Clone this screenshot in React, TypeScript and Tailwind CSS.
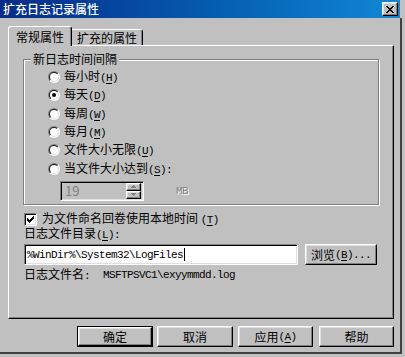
import React from "react";

const raised =
  "bg-[#c0c0c0] border border-t-white border-l-white border-r-black border-b-black shadow-[inset_-1px_-1px_0_#808080,inset_1px_1px_0_#dfdfdf]";
const sunken =
  "border border-t-[#808080] border-l-[#808080] border-r-white border-b-white shadow-[inset_1px_1px_0_#000,inset_-1px_-1px_0_#dfdfdf]";
const mono = "font-['Liberation_Mono',monospace] text-[11px] tracking-[-0.6px]";

function Ak({ k, suffix = "" }: { k: string; suffix?: string }) {
  return (
    <span className={mono}>
      (<span className="underline underline-offset-[2px]">{k}</span>){suffix}
    </span>
  );
}

function Radio({ checked }: { checked?: boolean }) {
  return (
    <svg width="12" height="12" viewBox="0 0 12 12" className="shrink-0">
      <defs>
        <linearGradient id="rgo" x1="0" y1="0" x2="1" y2="1">
          <stop offset="0.5" stopColor="#808080" />
          <stop offset="0.5" stopColor="#ffffff" />
        </linearGradient>
        <linearGradient id="rgi" x1="0" y1="0" x2="1" y2="1">
          <stop offset="0.5" stopColor="#202020" />
          <stop offset="0.5" stopColor="#dfdfdf" />
        </linearGradient>
      </defs>
      <circle cx="6" cy="6" r="6" fill="url(#rgo)" />
      <circle cx="6" cy="6" r="5" fill="url(#rgi)" />
      <circle cx="6" cy="6" r="4" fill="#ffffff" />
      {checked && <circle cx="6" cy="6" r="2" fill="#000" />}
    </svg>
  );
}

function RadioRow({ label, k, suffix, checked }: { label: string; k: string; suffix?: string; checked?: boolean }) {
  return (
    <div className="flex items-center h-[18.3px]">
      <Radio checked={checked} />
      <span className="ml-[4px] leading-[14px] whitespace-nowrap">
        {label}
        <Ak k={k} suffix={suffix} />
      </span>
    </div>
  );
}

function CloseGlyph() {
  const rows = [
    [0, 1, 6, 7],
    [1, 2, 5, 6],
    [2, 3, 4, 5],
    [3, 4],
    [2, 3, 4, 5],
    [1, 2, 5, 6],
    [0, 1, 6, 7],
  ];
  return (
    <svg width="8" height="7" viewBox="0 0 8 7" shapeRendering="crispEdges">
      {rows.map((r, y) => r.map((x) => <rect key={`${x}-${y}`} x={x} y={y} width="1" height="1" fill="#000" />))}
    </svg>
  );
}

function CheckGlyph() {
  const cols = [2, 3, 4, 3, 2, 1, 0];
  return (
    <svg width="7" height="7" viewBox="0 0 7 7" shapeRendering="crispEdges">
      {cols.map((y, x) => (
        <rect key={x} x={x} y={y} width="1" height="3" fill="#000" />
      ))}
    </svg>
  );
}

function SpinArrow({ up }: { up?: boolean }) {
  return (
    <svg width="5" height="3" viewBox="0 0 5 3" shapeRendering="crispEdges">
      {up ? (
        <>
          <rect x="2" y="0" width="1" height="1" fill="#808080" />
          <rect x="1" y="1" width="3" height="1" fill="#808080" />
          <rect x="0" y="2" width="5" height="1" fill="#808080" />
        </>
      ) : (
        <>
          <rect x="0" y="0" width="5" height="1" fill="#808080" />
          <rect x="1" y="1" width="3" height="1" fill="#808080" />
          <rect x="2" y="2" width="1" height="1" fill="#808080" />
        </>
      )}
    </svg>
  );
}

export default function App() {
  return (
    <div className="w-[405px] h-[357px] overflow-hidden bg-[#c0c0c0] text-black text-[12px] font-['Noto_Sans_CJK_SC','Noto_Sans',sans-serif]">
      <div className="w-[402px] flex flex-col">
        {/* Title bar */}
        <div className="w-[400px] h-[18px] bg-linear-to-r from-[#082a88] to-[#1288d4] flex items-center justify-between pl-[3px] pr-[2px]">
          <span className="text-white text-[12px] leading-[14px] font-medium whitespace-nowrap">扩充日志记录属性</span>
          <div className={`${raised} w-[16px] h-[14px] flex items-center justify-center`}>
            <CloseGlyph />
          </div>
        </div>

        {/* Body */}
        <div className="w-[402px] h-[336px] border-r-2 border-b-2 border-[#404040] pl-[8px] pr-[6px] pt-[8px] flex flex-col">
          {/* Tabs */}
          <div className="flex items-end h-[19px]">
            <div className="relative z-10 -mb-px h-[20px] w-[64px] bg-[#c0c0c0] border-l border-t border-r border-l-white border-t-white border-r-black shadow-[inset_-1px_0_0_#808080] rounded-t-[3px] flex justify-center pt-[3px] leading-[14px] whitespace-nowrap">
              常规属性
            </div>
            <div className="h-[16px] w-[71px] bg-[#c0c0c0] border-t border-r border-t-white border-r-black shadow-[inset_-1px_0_0_#808080] rounded-tr-[3px] flex justify-center pt-[1px] leading-[14px] whitespace-nowrap">
              扩充的属性
            </div>
          </div>

          {/* Panel */}
          <div className="w-[386px] h-[274px] border border-t-white border-l-white border-r-black border-b-black shadow-[inset_-1px_-1px_0_#808080] flex flex-col pl-[14px]">
            {/* Group box */}
            <div className="relative mt-[13px] w-[356px] h-[146px] border border-[#808080] shadow-[1px_1px_0_#fff,inset_1px_1px_0_#fff]">
              <span className="absolute -top-[8px] left-[7px] px-[2px] bg-[#c0c0c0] leading-[14px] whitespace-nowrap">
                新日志时间间隔
              </span>
              <div className="flex flex-col pl-[24px] pt-[8px]">
                <RadioRow label="每小时" k="H" />
                <RadioRow label="每天" k="D" checked />
                <RadioRow label="每周" k="W" />
                <RadioRow label="每月" k="M" />
                <RadioRow label="文件大小无限" k="U" />
                <RadioRow label="当文件大小达到" k="S" suffix=":" />
                <div className="flex items-center mt-[3px] ml-[12px]">
                  <div className={`${sunken} w-[84px] h-[20px] flex items-center justify-between pl-[4px] pr-[2px]`}>
                    <span className="text-[#808080] text-[13px] leading-[14px]">19</span>
                    <div className="flex flex-col">
                      <div className={`${raised} w-[15px] h-[8px] flex items-center justify-center`}>
                        <SpinArrow up />
                      </div>
                      <div className={`${raised} w-[15px] h-[8px] flex items-center justify-center`}>
                        <SpinArrow />
                      </div>
                    </div>
                  </div>
                  <span className={`${mono} ml-[32px] text-[#808080] [text-shadow:1px_1px_0_#fff]`}>MB</span>
                </div>
              </div>
            </div>

            {/* Lower section */}
            <div className="flex flex-col ml-[1px]">
              <div className="flex items-center mt-[6px] h-[16px]">
                <div className={`${sunken} bg-white w-[13px] h-[13px] flex items-center justify-center`}>
                  <CheckGlyph />
                </div>
                <span className="ml-[5px] leading-[14px] whitespace-nowrap">
                  为文件命名回卷使用本地时间 <Ak k="T" />
                </span>
              </div>
              <div className="flex items-center h-[14px]">
                <span className="leading-[14px] whitespace-nowrap">
                  日志文件目录
                  <Ak k="L" suffix=":" />
                </span>
              </div>
              <div className="flex items-center mt-[3px] h-[21px] gap-[7px]">
                <div className={`${sunken} bg-white w-[274px] h-[21px] flex items-center pl-[2px]`}>
                  <span className={`${mono} text-[11px] leading-[14px] whitespace-nowrap`}>{"%WinDir%\\System32\\LogFiles"}</span>
                  <span className="w-px h-[13px] bg-black ml-px" />
                </div>
                <div className={`${raised} w-[72px] h-[21px] flex items-center justify-center whitespace-nowrap leading-[14px]`}>
                  浏览
                  <Ak k="B" suffix="..." />
                </div>
              </div>
              <div className="flex items-center mt-[3px] h-[14px] whitespace-nowrap">
                <span className="leading-[14px]">
                  日志文件名<span className={mono}>:</span>
                </span>
                <span className={`${mono} ml-[13px] leading-[14px]`}>{"MSFTPSVC1\\exyymmdd.log"}</span>
              </div>
            </div>
          </div>

          {/* Buttons */}
          <div className="flex justify-end mt-[7px] h-[21px]">
            <div className="w-[76px] h-[21px] border border-black">
              <div className={`${raised} w-full h-full flex items-center justify-center leading-[14px]`}>确定</div>
            </div>
            <div className={`${raised} ml-[4px] w-[76px] h-[21px] flex items-center justify-center leading-[14px]`}>取消</div>
            <div className={`${raised} ml-[5px] w-[75px] h-[21px] flex items-center justify-center leading-[14px] whitespace-nowrap`}>
              应用
              <Ak k="A" />
            </div>
            <div className={`${raised} ml-[6px] w-[75px] h-[21px] flex items-center justify-center leading-[14px]`}>帮助</div>
          </div>
        </div>
      </div>
    </div>
  );
}
